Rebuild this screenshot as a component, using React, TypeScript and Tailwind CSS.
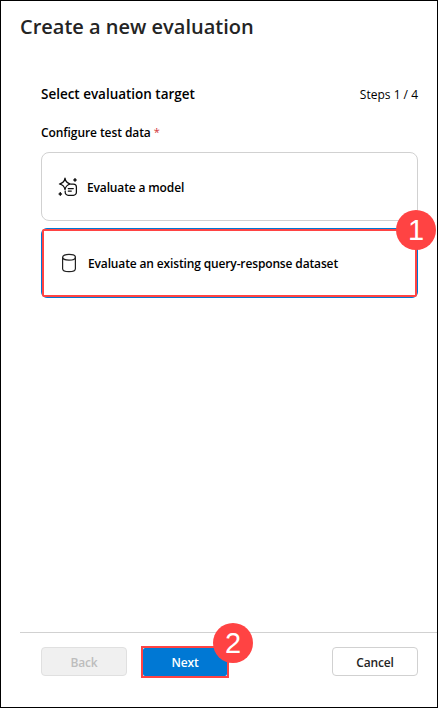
import React from "react";

function SparkleTargetIcon() {
  return (
    <svg width="20" height="20" viewBox="0 0 20 20" fill="none" stroke="#111" strokeWidth="1.25" strokeLinejoin="round" strokeLinecap="round">
      <path d="M7 1.2C7.5 4.4 9 6.2 12.4 7C9 7.8 7.5 9.4 7 12.6C6.5 9.4 5 7.8 1.4 7C5 6.2 6.5 4.4 7 1.2Z" />
      <path d="M13 7H15.4A3 3 0 0 1 18.4 10V15.3A3 3 0 0 1 15.4 18.3H10.2A3 3 0 0 1 7.2 15.3V14" />
      <path d="M10.3 11.5H15.3M10.3 14H13.3" />
      <path d="M17 1.9V4.1M15.9 3H18.1M2.3 15.9V18.1M1.2 17H3.4" strokeWidth="1.6" />
    </svg>
  );
}

function DatabaseIcon() {
  return (
    <svg width="16" height="20" viewBox="0 0 16 20" fill="none" stroke="#222" strokeWidth="1.2">
      <ellipse cx="8" cy="4.2" rx="6.4" ry="2.9" />
      <path d="M1.6 4.2V15.8C1.6 17.5 4.4 18.7 8 18.7S14.4 17.5 14.4 15.8V4.2" />
    </svg>
  );
}

function Badge({ n, place }: { n: string; place: string }) {
  return (
    <span className={`absolute flex size-10 items-center justify-center rounded-full bg-[#ff4343] font-['Liberation_Sans',sans-serif] text-[29px] leading-none font-normal tracking-normal text-white ${place}`}>
      {n}
    </span>
  );
}

export default function App() {
  return (
    <div className="flex h-[708px] w-[438px] flex-col border border-black bg-white font-['Open_Sans','Noto_Sans',sans-serif] text-xs font-semibold tracking-[-0.14px] text-black">
      <header className="flex h-[75px] pt-3 pl-[19px]">
        <h1 className="text-[20px] leading-7 tracking-normal text-[#242424]">Create a new evaluation</h1>
      </header>
      <main className="flex-1 pr-[19px] pl-10">
        <div className="flex h-[37px] items-center justify-between">
          <h2 className="pb-0.5 text-[13.5px] leading-5 tracking-[-0.02px]">Select evaluation target</h2>
          <span className="font-normal tracking-normal">Steps 1 / 4</span>
        </div>
        <div className="flex h-[39px] items-center gap-[3px]">
          <span className="tracking-[-0.08px]">Configure test data</span>
          <span className="text-[11px] font-normal text-[#d13438]">*</span>
        </div>
        <div className="flex flex-col gap-[7px]">
          <button className="flex h-[69px] items-center gap-2 rounded-lg border border-[#d1d1d1] pl-4">
            <SparkleTargetIcon />
            <span className="pt-[3px] pl-px">Evaluate a model</span>
          </button>
          <button className="relative h-[70px] rounded-md border border-[#0078d4]">
            <span className="flex h-full items-center gap-[10px] rounded-[2px] border-2 border-[#ff4343] bg-white pl-[17px]">
              <DatabaseIcon />
              <span className="pt-px pl-px">Evaluate an existing query-response dataset</span>
            </span>
            <Badge n="1" place="-top-[19px] -right-[19px]" />
          </button>
        </div>
      </main>
      <footer className="ml-[19px] flex h-[75px] items-start border-t border-[#d1d1d1] pt-[14px] pr-[19px] pl-[21px]">
        <button className="h-[29px] w-[86px] rounded-[4px] border border-[#e0e0e0] bg-[#f0f0f0] pt-0.5 text-[#bdbdbd]">Back</button>
        <div className="relative -mt-px ml-[14px] h-8 w-[88px] border-2 border-[#ff4343] bg-white">
          <button className="h-full w-full rounded-[2px] bg-[#0078d4] pt-px text-white">Next</button>
          <Badge n="2" place="-top-[25px] -right-[26px]" />
        </div>
        <button className="ml-auto h-[29px] w-[86px] rounded-[4px] border border-[#d1d1d1] pt-0.5 text-[#242424]">Cancel</button>
      </footer>
    </div>
  );
}
